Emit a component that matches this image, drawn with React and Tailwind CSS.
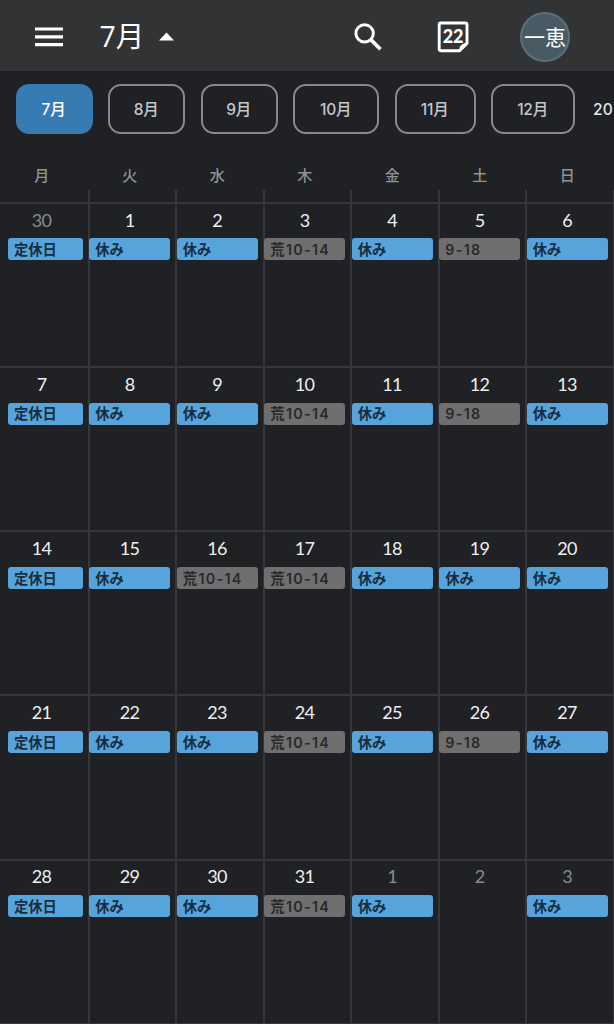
import React from "react";

const months = [
  { label: "7月", width: "w-[77px]", active: true },
  { label: "8月", width: "w-[77px]" },
  { label: "9月", width: "w-[77px]" },
  { label: "10月", width: "w-[86px]" },
  { label: "11月", width: "w-[81px]" },
  { label: "12月", width: "w-[84px]" },
];

const weekdays = ["月", "火", "水", "木", "金", "土", "日"];

const T = "定休日";
const Y = "休み";
const A = "荒10-14";
const N = "9-18";

const weeks = [
  { days: [30, 1, 2, 3, 4, 5, 6], events: [T, Y, Y, A, Y, N, Y] },
  { days: [7, 8, 9, 10, 11, 12, 13], events: [T, Y, Y, A, Y, N, Y] },
  { days: [14, 15, 16, 17, 18, 19, 20], events: [T, Y, A, A, Y, Y, Y] },
  { days: [21, 22, 23, 24, 25, 26, 27], events: [T, Y, Y, A, Y, N, Y] },
  { days: [28, 29, 30, 31, 1, 2, 3], events: [T, Y, Y, A, Y, null, Y] },
];

const isOutside = (week, day) => (week === 0 && day > 20) || (week === 4 && day < 10);

const columns = "grid grid-cols-[89.6px_repeat(6,87.5px)]";

function Header() {
  return (
    <header className="flex h-[71px] shrink-0 items-center bg-[#323335] pt-[2px] text-white">
      <svg className="ml-[35px] h-[20px] w-[28px]" viewBox="0 0 28 20" fill="currentColor">
        <path d="M0 .4h28v3.2H0zM0 8.2h28v3.2H0zM0 16h28v3.2H0z" />
      </svg>
      <h1 className="ml-[36.5px] w-[45.5px] whitespace-nowrap pb-[1px] font-['Open_Sans','Noto_Sans_CJK_JP',sans-serif] text-[28.5px] leading-[40px] font-normal">7月</h1>
      <svg className="ml-[14px] h-[9px] w-[15px]" viewBox="0 0 15 9" fill="currentColor">
        <path d="M0 8.5 7.5.5 15 8.5z" />
      </svg>
      <svg className="ml-[180px] h-[28px] w-[28px]" viewBox="0 0 28 28" fill="none" stroke="currentColor" strokeWidth="3">
        <circle cx="10.6" cy="10.4" r="8.7" />
        <path d="M16.8 16.6 26.5 26.3" strokeWidth="3.7" />
      </svg>
      <svg className="ml-[55px] h-[32px] w-[32px]" viewBox="0 0 32 32">
        <path d="M3.8 2h24.6a1.6 1.6 0 0 1 1.6 1.6v18.9l-7.4 7.2H3.8a1.6 1.6 0 0 1-1.6-1.6V3.6A1.6 1.6 0 0 1 3.8 2z" fill="none" stroke="white" strokeWidth="2.9" strokeLinejoin="round" />
        <path d="M21.5 29.5 23.2 25.2l2-2L30 21v2z" fill="white" />
        <text x="16.1" y="21.8" textAnchor="middle" fill="white" fontSize="18" fontWeight="900" className="font-['Lato',sans-serif]">22</text>
      </svg>
      <div className="ml-[51px] flex h-[50px] w-[50px] items-center justify-center whitespace-nowrap rounded-full border-[2px] border-[#5f6f77] bg-[#485a63] text-[21px] leading-none">一恵</div>
    </header>
  );
}

function EventBar({ label, first }) {
  const tone = label === A || label === N ? "bg-[#6f6f70] text-[#29292b] tracking-[1.3px]" : "bg-[#57a4dd] text-[#172e3f]";
  return (
    <div className={`flex h-[22px] items-center whitespace-nowrap rounded-[3px] pt-[2px] pl-[6px] font-['Inter','Noto_Sans_CJK_JP',sans-serif] text-[14.3px] leading-none font-semibold ${first ? "ml-[8px] mr-[4.6px]" : "-ml-[0.3px] mr-[4.8px]"} ${tone}`}>
      {label}
    </div>
  );
}

export default function App() {
  return (
    <main className="flex h-[1024px] w-[614px] flex-col overflow-hidden bg-[#202124] font-['Lato','Noto_Sans_CJK_JP',sans-serif]">
      <Header />
      <nav className="mt-[13px] ml-[15.6px] flex h-[50px] shrink-0 items-center gap-[15.5px] font-['Inter','Noto_Sans_CJK_JP',sans-serif] text-[15.5px] text-[#c6c7c9]">
        {months.map((m) => (
          <button
            key={m.label}
            className={`h-[50px] shrink-0 rounded-[13px] border-[2px] pt-[1px] pr-[1px] font-medium tracking-[-0.2px] ${m.width} ${m.active ? "border-[#367cb3] bg-[#367cb3] text-white" : "border-[#88898c]"}`}
          >
            {m.label}
          </button>
        ))}
        <span className="ml-[2.5px] whitespace-nowrap pt-[1px] font-medium text-[#e4e5e7]">20</span>
      </nav>
      <div className={`mt-[27px] h-[29px] shrink-0 ${columns}`}>
        {weekdays.map((d, i) => (
          <div key={d} className={`pr-[7px] text-center text-[15px] leading-[28px] font-medium text-[#919295] ${i === 0 ? "pl-[1px]" : ""}`}>{d}</div>
        ))}
      </div>
      <div className={`h-[12px] shrink-0 ${columns}`}>
        {weekdays.map((d) => (
          <div key={d} className="border-r-[2px] border-[#36373a]" />
        ))}
      </div>
      {weeks.map((week, w) => (
        <section key={w} className={`h-[164.15px] shrink-0 ${columns}`}>
          {week.days.map((day, i) => (
            <div key={i} className="min-w-0 border-t-[2px] border-r-[2px] border-[#36373a]">
              <div className={`mt-[3.5px] h-[30.9px] pr-[5.5px] text-center text-[18px] leading-[24px] tracking-[-0.7px] ${i === 0 ? "pl-[1px]" : ""} ${isOutside(w, day) ? "text-[#8b8c8f]" : "text-[#eeeff1]"}`}>{day}</div>
              {week.events[i] && <EventBar label={week.events[i]} first={i === 0} />}
            </div>
          ))}
        </section>
      ))}
      <div className="h-[2px] shrink-0 bg-[#36373a]" />
    </main>
  );
}
